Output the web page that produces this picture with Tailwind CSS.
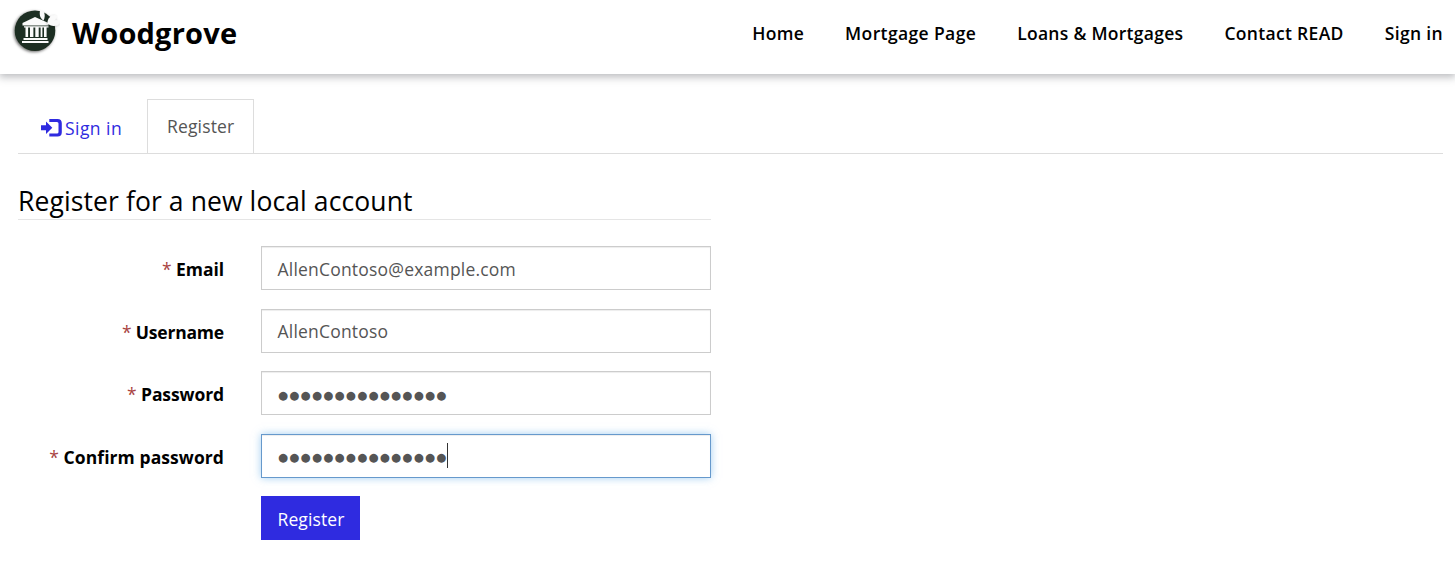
<!DOCTYPE html>
<html lang="en">
<head>
<meta charset="utf-8">
<title>Woodgrove</title>
<script src="https://cdn.jsdelivr.net/npm/@tailwindcss/browser@4"></script>
</head>
<body class="h-[561px] overflow-hidden bg-white font-['Open_Sans',sans-serif] text-[17.5px] leading-6 text-black">
<header class="flex h-[74px] items-start justify-between bg-white pr-[12px] pl-[10px] shadow-[0_2px_8px_1px_rgba(60,64,72,0.36)]">
  <div class="flex items-start gap-[12px] pt-[6px]">
    <svg class="size-[50px]" viewBox="0 0 50 50">
      <defs><filter id="s" x="-20%" y="-20%" width="140%" height="140%"><feDropShadow dx="-1" dy="1" stdDeviation="1.5" flood-opacity=".6"/></filter><filter id="t" x="-30%" y="-30%" width="160%" height="160%"><feDropShadow dx="-.5" dy=".7" stdDeviation=".8" flood-opacity=".3"/></filter></defs>
      <circle cx="25" cy="24.700" r="20.300" fill="#1f2d20" filter="url(#s)"/>
      <g fill="#fafafa">
        <path d="M25 11 38.500 17V19.500H12.500V17Z"/>
        <path d="M14 20.300h24.500v1.200H14zM15.500 21h2.600v10h-2.600zM20 21h3.400v10h-3.400zM25.300 21h3.400v10h-3.400zM30.600 21h1.800v10h-1.800zM34 21h2.600v10h-2.600zM13.500 32h24v2h-24zM12 35h26.500v2H12z"/>
        <path d="M30.500 3.500c4 1 5.500 6 3 11-4-2.500-4.500-7-3-11Z"/>
        <path d="M37.500 17.500c0-5 3-8.500 8-8.500 1.500 2 .5 4-1 5.500 2.500-.5 4.500.5 5.500 2-3 4.500-8.500 4.500-12.500 1Z" filter="url(#t)"/>
      </g>
    </svg>
    <span class="pt-[7px] text-[29px] leading-10 font-bold tracking-[0.2px]">Woodgrove</span>
  </div>
  <nav class="flex gap-[41px] pt-[21px] font-semibold tracking-[0.3px]">
    <a>Home</a><a class="tracking-[0.38px]">Mortgage Page</a><a class="tracking-[0.28px]">Loans &amp; Mortgages</a><a class="tracking-[0.32px]">Contact READ</a><a class="tracking-[0.35px]">Sign in</a>
  </nav>
</header>
<main class="pt-[25px] pr-[12px] pl-[18px]">
  <div class="flex h-[55px] border-b border-[#ddd]">
    <a class="flex w-[129px] items-start gap-[3px] pt-[17px] pl-[23px] text-[#2f2be0]">
      <svg class="mt-[3px] h-[18px] w-[21px]" viewBox="0 0 21 18" fill="currentColor"><path d="M0 6.200h5V2.600L11.300 8.800 5 15V11.300H0Z"/><path d="M8.300 0H16.500Q20.800 0 20.800 4.300V13.200Q20.800 17.500 16.500 17.500H8.300V14.500H16Q17.500 14.500 17.500 13V4.500Q17.500 3 16 3H8.300Z"/></svg>
      <span class="tracking-[0.45px]">Sign in</span>
    </a>
    <a class="h-[54px] w-[107px] border border-b-0 border-[#ddd] pt-[14px] pl-[19px] tracking-[0.15px] text-[#555]">Register</a>
  </div>
  <form class="w-[693px]">
    <h1 class="mt-[28px] mb-[26px] h-[38px] border-b border-[#e5e5e5] text-[26.5px] leading-[39px] tracking-[0.1px]">Register for a new local account</h1>
    <div class="flex flex-col gap-[18.500px]">
      <div class="flex h-[44px] items-center gap-[37px]"><label class="w-[206px] pt-[2px] text-right font-bold tracking-[-0.05px]"><span class="font-normal text-[#a94442]">* </span>Email</label><div class="flex h-[44px] flex-1 items-center border border-[#ccc] pt-[2px] pl-[15.500px] tracking-[0.2px] text-[#555] shadow-[inset_0_1px_1px_rgba(0,0,0,0.075)]">AllenContoso@example.com</div></div>
      <div class="flex h-[44px] items-center gap-[37px]"><label class="w-[206px] pt-[2px] text-right font-bold tracking-[-0.2px]"><span class="font-normal text-[#a94442]">* </span>Username</label><div class="flex h-[44px] flex-1 items-center border border-[#ccc] pl-[15.500px] tracking-[0.2px] text-[#555] shadow-[inset_0_1px_1px_rgba(0,0,0,0.075)]">AllenContoso</div></div>
      <div class="flex h-[44px] items-center gap-[37px]"><label class="w-[206px] pt-[2px] text-right font-bold tracking-[-0.1px]"><span class="font-normal text-[#a94442]">* </span>Password</label><div class="flex h-[44px] flex-1 items-center border border-[#ccc] pt-[3px] pl-[16px] text-[#555] shadow-[inset_0_1px_1px_rgba(0,0,0,0.075)]"><span class="font-['DejaVu_Sans'] text-[11.500px] tracking-[1.270px]">●●●●●●●●●●●●●●●</span></div></div>
      <div class="flex h-[44px] items-center gap-[37px]"><label class="w-[206px] pt-[2px] text-right font-bold tracking-[0.08px]"><span class="font-normal text-[#a94442]">* </span>Confirm password</label><div class="flex h-[44px] flex-1 items-center border border-[#6699cc] pl-[16px] text-[#555] shadow-[inset_0_1px_1px_rgba(0,0,0,0.075),0_0_8px_rgba(102,175,233,0.6)]"><span class="pt-[3px] font-['DejaVu_Sans'] text-[11.500px] tracking-[1.270px]">●●●●●●●●●●●●●●●</span><i class="-ml-px h-[25px] w-px bg-[#333]"></i></div></div>
    </div>
    <button type="button" class="mt-[18px] ml-[243px] h-[44px] w-[99px] bg-[#2f2be0] pt-[2px] pl-px tracking-[0.1px] text-white">Register</button>
  </form>
</main>
</body>
</html>
